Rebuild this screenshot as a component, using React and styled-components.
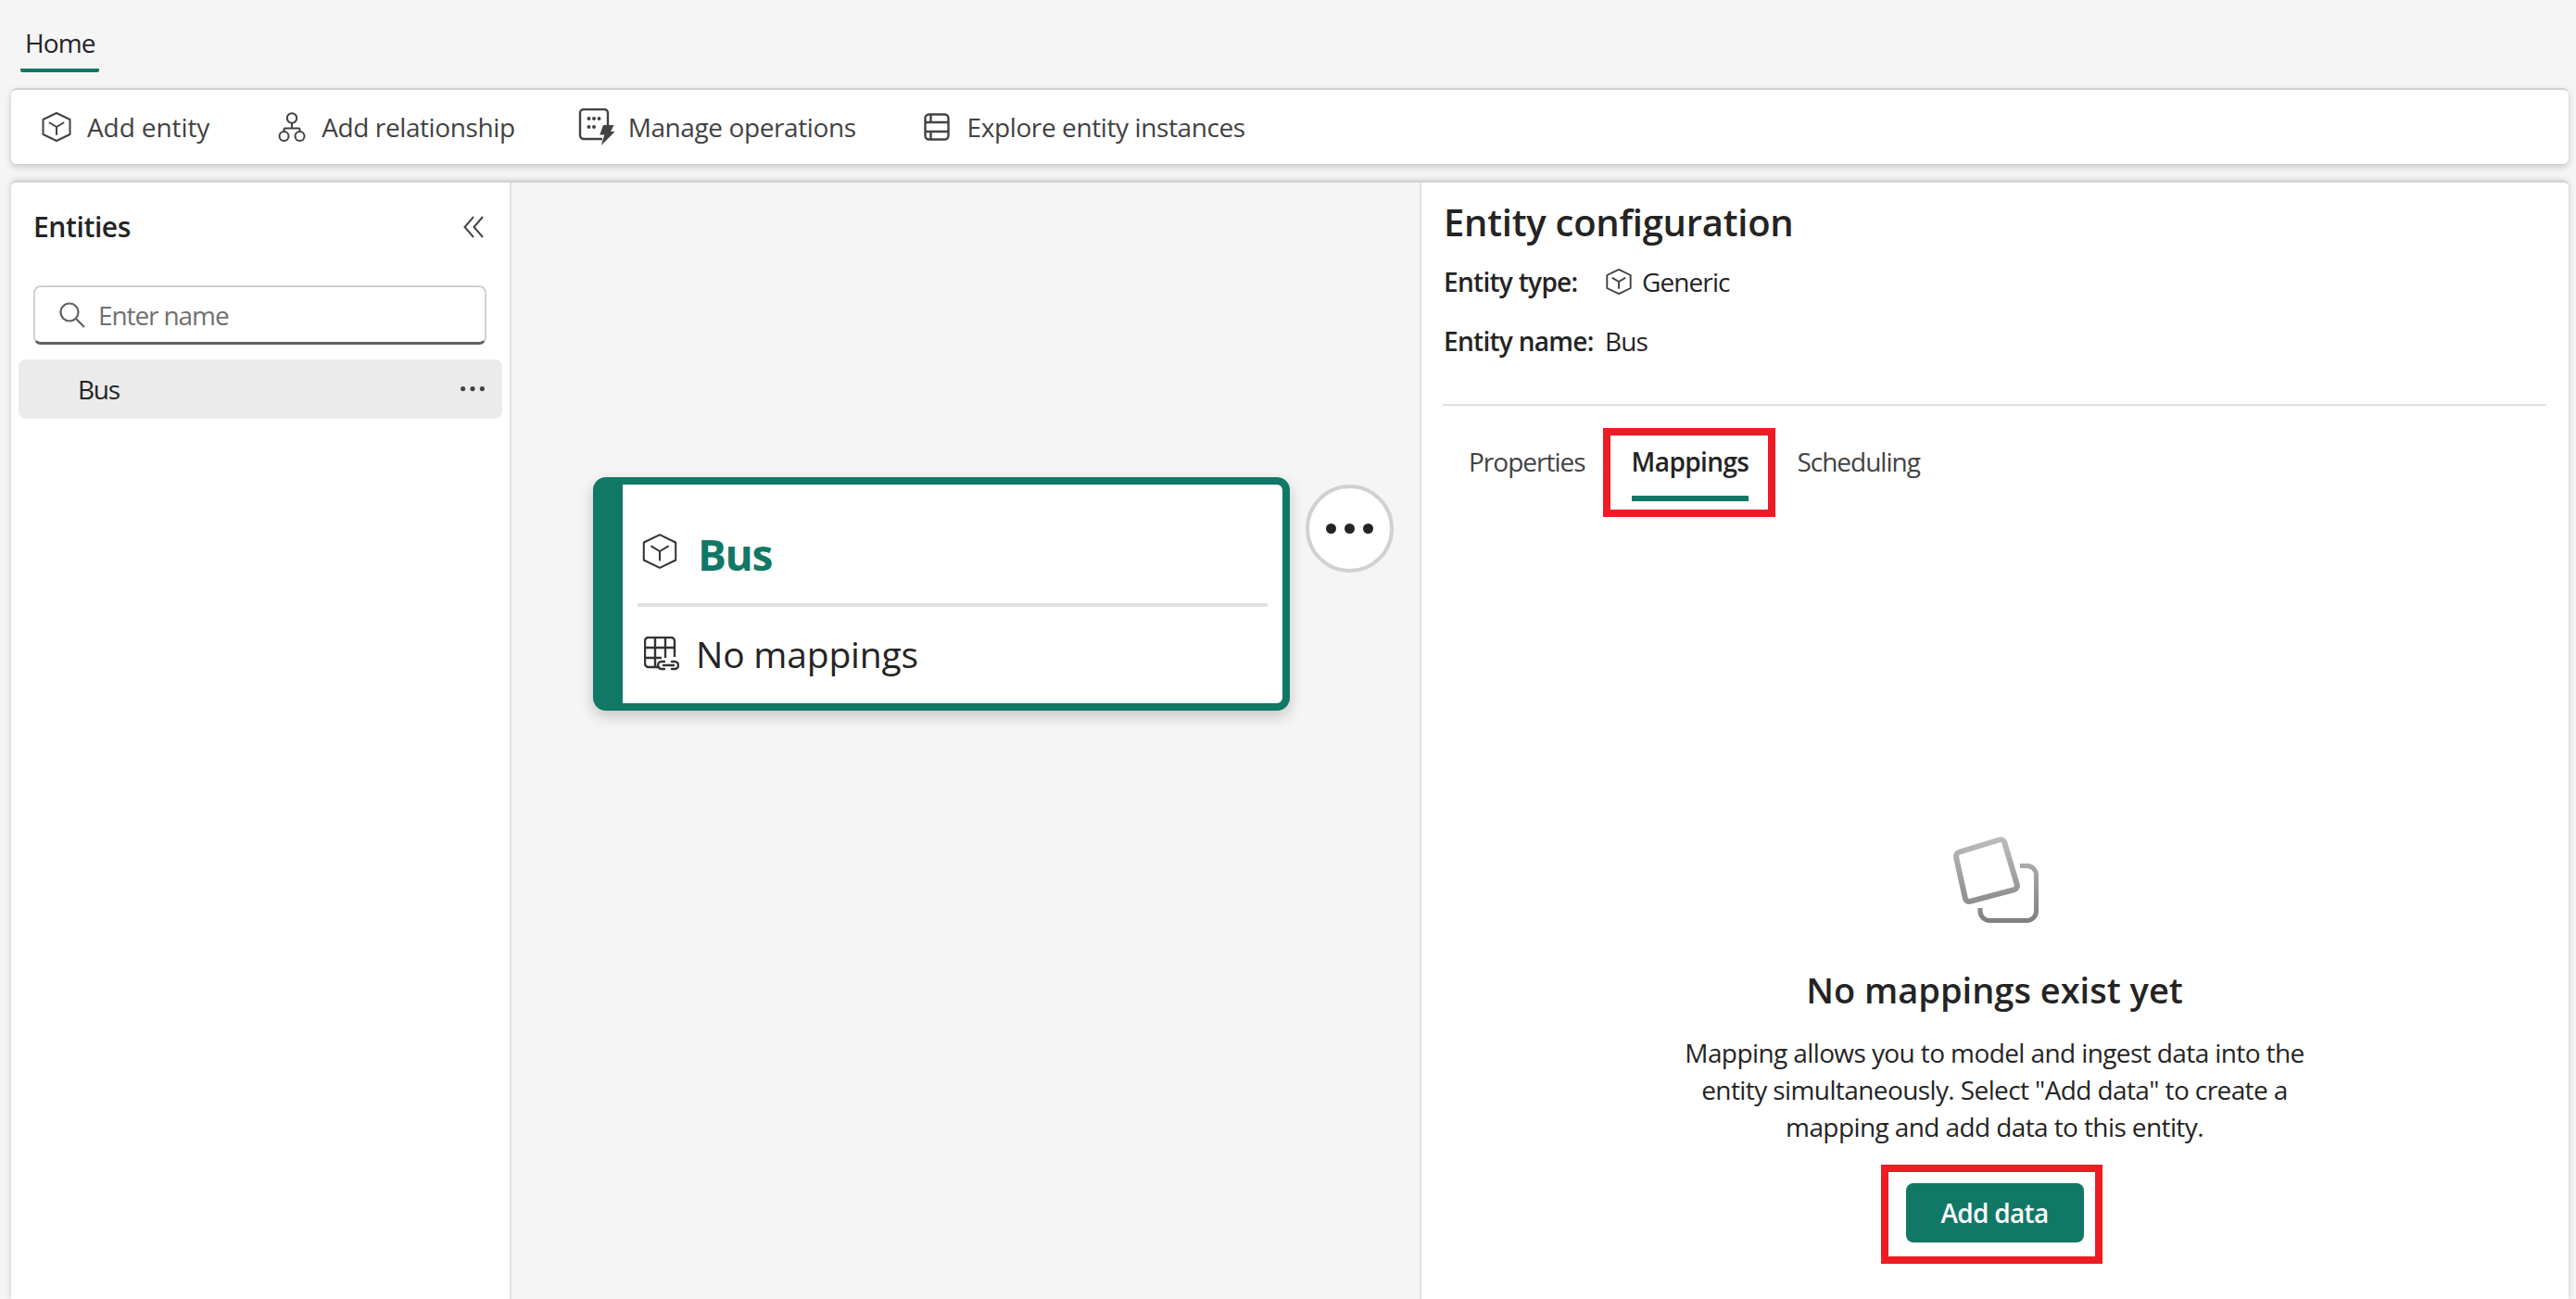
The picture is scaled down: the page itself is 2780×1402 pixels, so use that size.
import React from "react";
import styled, { createGlobalStyle } from "styled-components";

const GREEN = "#117865";
const FONT = `"Open Sans", "Noto Sans", Arial, sans-serif`;

const Global = createGlobalStyle`
  html, body { margin: 0; padding: 0; background: #f5f5f5; }
  body { font-family: ${FONT}; color: #242424; }
  * { box-sizing: border-box; }
`;

const Page = styled.div`
  width: 2780px;
  height: 1402px;
  overflow: hidden;
  display: flex;
  flex-direction: column;
  background: #f5f5f5;
  padding: 0 8px 0 12px;
`;

const RibbonTabs = styled.div`
  height: 95px;
  display: flex;
  align-items: flex-start;
  padding: 27px 0 0 10px;
`;

const RibbonTab = styled.div`
  position: relative;
  width: 85px;
  height: 51px;
  padding-left: 5px;
  font-size: 28px;
  line-height: 38px;
  letter-spacing: -0.9px;
  color: #242424;
  border-bottom: 4px solid ${GREEN};
  border-radius: 0 0 2px 2px;
`;

const Toolbar = styled.div`
  height: 82px;
  flex: none;
  background: #fff;
  border-top: 2px solid #d1d1d1;
  border-radius: 6px;
  box-shadow: 0 3px 7px rgba(0, 0, 0, 0.2);
  display: flex;
  align-items: center;
`;

const ToolButton = styled.div`
  display: flex;
  align-items: center;
  margin-left: ${(p) => p.$left}px;
  gap: ${(p) => p.$gap}px;
  font-size: 28px;
  line-height: 38px;
  letter-spacing: ${(p) => p.$track ?? -0.4}px;
  color: #424242;
  white-space: nowrap;
  font-weight: 500;
`;

const Main = styled.div`
  margin-top: 18px;
  flex: 1;
  min-height: 0;
  display: grid;
  grid-template-columns: 540px 982px 1fr;
  background: #fff;
  border-top: 2px solid #d1d1d1;
  border-radius: 6px 6px 0 0;
  box-shadow: 0 0 6px rgba(0, 0, 0, 0.2);
`;

const LeftPanel = styled.aside`
  background: #fff;
  border-right: 2px solid #e0e0e0;
  padding: 0 8px 0 8px;
  border-radius: 6px 0 0 0;
`;

const LeftHeader = styled.div`
  height: 62px;
  margin-top: 17px;
  padding: 0 20px 0 16px;
  display: flex;
  align-items: center;
  justify-content: space-between;
`;

const LeftTitle = styled.h2`
  margin: 0;
  font-size: 30px;
  line-height: 40px;
  font-weight: 600;
  letter-spacing: -0.4px;
  color: #242424;
`;

const SearchBox = styled.div`
  margin: 32px 17px 16px 16px;
  height: 64px;
  background: #fff;
  border: 2px solid #d1d1d1;
  border-bottom: 3px solid #616161;
  border-radius: 8px;
  display: flex;
  align-items: center;
  padding-left: 26px;
  gap: 14px;
  font-size: 28px;
  letter-spacing: -1.1px;
  color: #707070;
`;

const ListRow = styled.div`
  height: 64px;
  background: #ebebeb;
  border-radius: 8px;
  display: flex;
  align-items: center;
  justify-content: space-between;
  padding: 0 19px 0 64px;
  font-size: 28px;
  letter-spacing: -1.3px;
  color: #242424;
`;

const Canvas = styled.section`
  background: #f5f5f5;
  border-right: 2px solid #e0e0e0;
  padding: 318px 0 0 88px;
  display: flex;
  align-items: flex-start;
`;

const EntityCard = styled.div`
  width: 752px;
  height: 252px;
  flex: none;
  display: flex;
  flex-direction: column;
  background: #fff;
  border: 8px solid ${GREEN};
  border-left-width: 32px;
  border-radius: 14px;
  box-shadow: 0 6px 16px rgba(0, 0, 0, 0.2);
  padding: 0 16px 0 16px;
`;

const CardTitleRow = styled.div`
  height: 132px;
  flex: none;
  display: flex;
  align-items: center;
  gap: 22px;
  padding: 15px 0 0 5px;
  border-bottom: 4px solid #e0e0e0;
`;

const CardTitle = styled.div`
  margin-top: 6px;
  font-size: 46px;
  line-height: 60px;
  font-weight: 700;
  letter-spacing: -1.3px;
  color: ${GREEN};
`;

const CardStatusRow = styled.div`
  flex: 1;
  display: flex;
  align-items: center;
  gap: 18px;
  padding: 0 0 4px 7px;
  font-size: 39px;
  letter-spacing: -0.2px;
  color: #242424;
`;

const MoreCircle = styled.div`
  width: 95px;
  height: 95px;
  flex: none;
  margin: 8px 0 0 17px;
  border-radius: 50%;
  background: #fff;
  border: 4px solid #d1d1d1;
  display: flex;
  align-items: center;
  justify-content: center;
`;

const RightPanel = styled.section`
  background: #fff;
  padding: 0 24px 0 24px;
  display: flex;
  flex-direction: column;
  min-width: 0;
  border-radius: 0 6px 0 0;
`;

const ConfigTitle = styled.h1`
  margin: 16px 0 0;
  font-size: 40px;
  line-height: 54px;
  font-weight: 600;
  letter-spacing: -0.25px;
  color: #242424;
`;

const MetaRow = styled.div`
  margin-top: ${(p) => p.$top}px;
  height: 38px;
  display: flex;
  align-items: center;
  font-size: 28px;
  letter-spacing: -0.9px;
  color: #242424;
`;

const MetaLabel = styled.span`
  font-weight: 600;
  letter-spacing: -0.7px;
  width: ${(p) => p.$width}px;
  flex: none;
`;

const MetaValue = styled.span`
  margin-left: ${(p) => p.$left}px;
`;

const Rule = styled.div`
  margin: 49px 0 0 -1px;
  height: 2px;
  background: #e0e0e0;
`;

const TabStrip = styled.div`
  display: flex;
  align-items: flex-start;
  padding: 41px 0 0 27px;
`;

const PanelTab = styled.div`
  position: relative;
  height: 62px;
  margin-right: ${(p) => p.$gap}px;
  font-size: 28px;
  line-height: 38px;
  letter-spacing: ${(p) => (p.$active ? -0.6 : -1)}px;
  font-weight: ${(p) => (p.$active ? 600 : 400)};
  color: ${(p) => (p.$active ? "#242424" : "#424242")};
  border-bottom: ${(p) => (p.$active ? `6px solid ${GREEN}` : "none")};
`;

const Callout = styled.span`
  position: absolute;
  left: ${(p) => p.$left}px;
  right: ${(p) => p.$right}px;
  top: ${(p) => p.$top}px;
  bottom: ${(p) => p.$bottom}px;
  border: 8px solid #ed1c24;
  pointer-events: none;
`;

const EmptyState = styled.div`
  margin-top: 361px;
  display: flex;
  flex-direction: column;
  align-items: center;
  padding-right: 1px;
`;

const EmptyHeading = styled.h3`
  margin: 47px 0 0;
  font-size: 38px;
  line-height: 50px;
  font-weight: 600;
  color: #242424;
`;

const EmptyText = styled.p`
  margin: 23px 0 0;
  width: 700px;
  text-align: center;
  font-size: 28px;
  line-height: 40px;
  letter-spacing: -0.6px;
  color: #242424;
`;

const PrimaryButton = styled.div`
  position: relative;
  margin-top: 41px;
  width: 192px;
  height: 64px;
  border-radius: 8px;
  background: ${GREEN};
  color: #fff;
  font-size: 28px;
  font-weight: 600;
  letter-spacing: -0.7px;
  display: flex;
  align-items: center;
  justify-content: center;
`;

const CubeIcon = ({ size = 32, stroke = 2, color = "#424242" }) => (
  <svg width={size} height={size} viewBox="0 0 32 32" fill="none" stroke={color} strokeWidth={stroke} strokeLinejoin="round" strokeLinecap="round">
    <path d="M16 1 30.5 8v16L16 31 1.500 24V8z" />
    <path d="M8.500 11.500 16 16l7.500-4.500M16 16v8" />
  </svg>
);

const RelationIcon = () => (
  <svg width="32" height="32" viewBox="0 0 32 32" fill="none" stroke="#424242" strokeWidth="2">
    <circle cx="16" cy="6.500" r="5.200" />
    <path d="M16 12v5.500M7.500 22v-3.500a1 1 0 0 1 1-1h15a1 1 0 0 1 1 1V22" />
    <circle cx="7.500" cy="26" r="5" />
    <circle cx="24.500" cy="26" r="5" />
  </svg>
);

const OperationsIcon = () => (
  <svg width="40" height="40" viewBox="0 0 40 40" fill="none">
    <path d="M26 33H6a4 4 0 0 1-4-4V5a4 4 0 0 1 4-4h22a4 4 0 0 1 4 4v13" stroke="#424242" strokeWidth="2.400" />
    <g fill="#424242">
      <circle cx="11.500" cy="11" r="2" />
      <circle cx="17" cy="11" r="2" />
      <circle cx="22.500" cy="11" r="2" />
      <circle cx="11.500" cy="20" r="2" />
      <circle cx="17" cy="20" r="2" />
      <path d="M27 18h11.500l-3.500 7h4.600L24.800 40l3.400-11.500h-5z" />
    </g>
  </svg>
);

const GridIcon = () => (
  <svg width="28" height="30" viewBox="0 0 28 30" fill="none" stroke="#424242" strokeWidth="2.400">
    <rect x="1.500" y="1.500" width="25" height="27" rx="4" />
    <path d="M1.500 10h25M1.500 20h25M7.500 1.500V10M7.500 20v8.500" />
  </svg>
);

const TableLinkIcon = () => (
  <svg width="38" height="37" viewBox="0 0 38 37" fill="none" stroke="#333" strokeWidth="2.400">
    <path d="M17 33H5a4 4 0 0 1-4-4V5a4 4 0 0 1 4-4h24a4 4 0 0 1 4 4v17" />
    <path d="M1 12h32M1 23h18M12 1v32M23 1v22" />
    <path d="M22 27h-3a4 4 0 0 0 0 8h3M30 27h3a4 4 0 0 1 0 8h-3M21 31h11" strokeLinecap="round" />
  </svg>
);

const ChevronsIcon = () => (
  <svg width="22" height="24" viewBox="0 0 22 24" fill="none" stroke="#424242" strokeWidth="2">
    <path d="M11 1 1.500 12 11 23M21 1 11.500 12 21 23" />
  </svg>
);

const SearchIcon = () => (
  <svg width="28" height="28" viewBox="0 0 28 28" fill="none" stroke="#616161" strokeWidth="2.200">
    <circle cx="11" cy="11" r="9.500" />
    <path d="m18 18 9 9" />
  </svg>
);

const Dots = ({ width = 26, r = 2.6, color = "#424242" }) => (
  <svg width={width} height={r * 2 + 2} viewBox={`0 0 ${width} ${r * 2 + 2}`} fill={color}>
    <circle cx={r} cy={r + 1} r={r} />
    <circle cx={width / 2} cy={r + 1} r={r} />
    <circle cx={width - r} cy={r + 1} r={r} />
  </svg>
);

const EmptyIcon = () => (
  <svg width="94" height="94" viewBox="0 0 94 94" fill="none">
    <defs>
      <linearGradient id="emptyGrad" gradientUnits="userSpaceOnUse" x1="0" y1="0" x2="0" y2="94">
        <stop offset="0" stopColor="#bdbdbd" />
        <stop offset="1" stopColor="#7f7f7f" />
      </linearGradient>
    </defs>
    <path d="M74 32.500h8a10 10 0 0 1 9.500 10V81.500a10 10 0 0 1-10 10H41a10 10 0 0 1-10-10V78" stroke="url(#emptyGrad)" strokeWidth="5" />
    <path d="M5.200 23.900Q4 19 8.800 17.500L51.200 4.500Q56 3 57.400 7.800L70.600 52.200Q72 57 67.200 58.300L20.900 70.700Q16 72 14.800 67.200Z" stroke="url(#emptyGrad)" strokeWidth="6" />
  </svg>
);

export default function App() {
  return (
    <Page>
      <Global />
      <RibbonTabs>
        <RibbonTab>Home</RibbonTab>
      </RibbonTabs>
      <Toolbar>
        <ToolButton $left={33} $gap={17} $track={-0.1}><CubeIcon />Add entity</ToolButton>
        <ToolButton $left={73} $gap={16}><RelationIcon />Add relationship</ToolButton>
        <ToolButton $left={68} $gap={14}><OperationsIcon />Manage operations</ToolButton>
        <ToolButton $left={73} $gap={19}><GridIcon />Explore entity instances</ToolButton>
      </Toolbar>
      <Main>
        <LeftPanel>
          <LeftHeader>
            <LeftTitle>Entities</LeftTitle>
            <ChevronsIcon />
          </LeftHeader>
          <SearchBox><SearchIcon />Enter name</SearchBox>
          <ListRow>Bus<Dots /></ListRow>
        </LeftPanel>
        <Canvas>
          <EntityCard>
            <CardTitleRow>
              <CubeIcon size={38} stroke={1.7} color="#333" />
              <CardTitle>Bus</CardTitle>
            </CardTitleRow>
            <CardStatusRow><TableLinkIcon />No mappings</CardStatusRow>
          </EntityCard>
          <MoreCircle><Dots width={51} r={5.5} color="#242424" /></MoreCircle>
        </Canvas>
        <RightPanel>
          <ConfigTitle>Entity configuration</ConfigTitle>
          <MetaRow $top={18}>
            <MetaLabel $width={175}>Entity type:</MetaLabel>
            <CubeIcon size={28} stroke={2.2} />
            <MetaValue $left={11}>Generic</MetaValue>
          </MetaRow>
          <MetaRow $top={26}>
            <MetaLabel $width={174}>Entity name:</MetaLabel>
            Bus
          </MetaRow>
          <Rule />
          <TabStrip>
            <PanelTab $gap={50}>Properties</PanelTab>
            <PanelTab $gap={52} $active>
              Mappings
              <Callout $left={-31} $right={-29} $top={-17} $bottom={-23} />
            </PanelTab>
            <PanelTab>Scheduling</PanelTab>
          </TabStrip>
          <EmptyState>
            <EmptyIcon />
            <EmptyHeading>No mappings exist yet</EmptyHeading>
            <EmptyText>Mapping allows you to model and ingest data into the entity simultaneously. Select "Add data" to create a mapping and add data to this entity.</EmptyText>
            <PrimaryButton>
              Add data
              <Callout $left={-27} $right={-20} $top={-20} $bottom={-23} />
            </PrimaryButton>
          </EmptyState>
        </RightPanel>
      </Main>
    </Page>
  );
}
